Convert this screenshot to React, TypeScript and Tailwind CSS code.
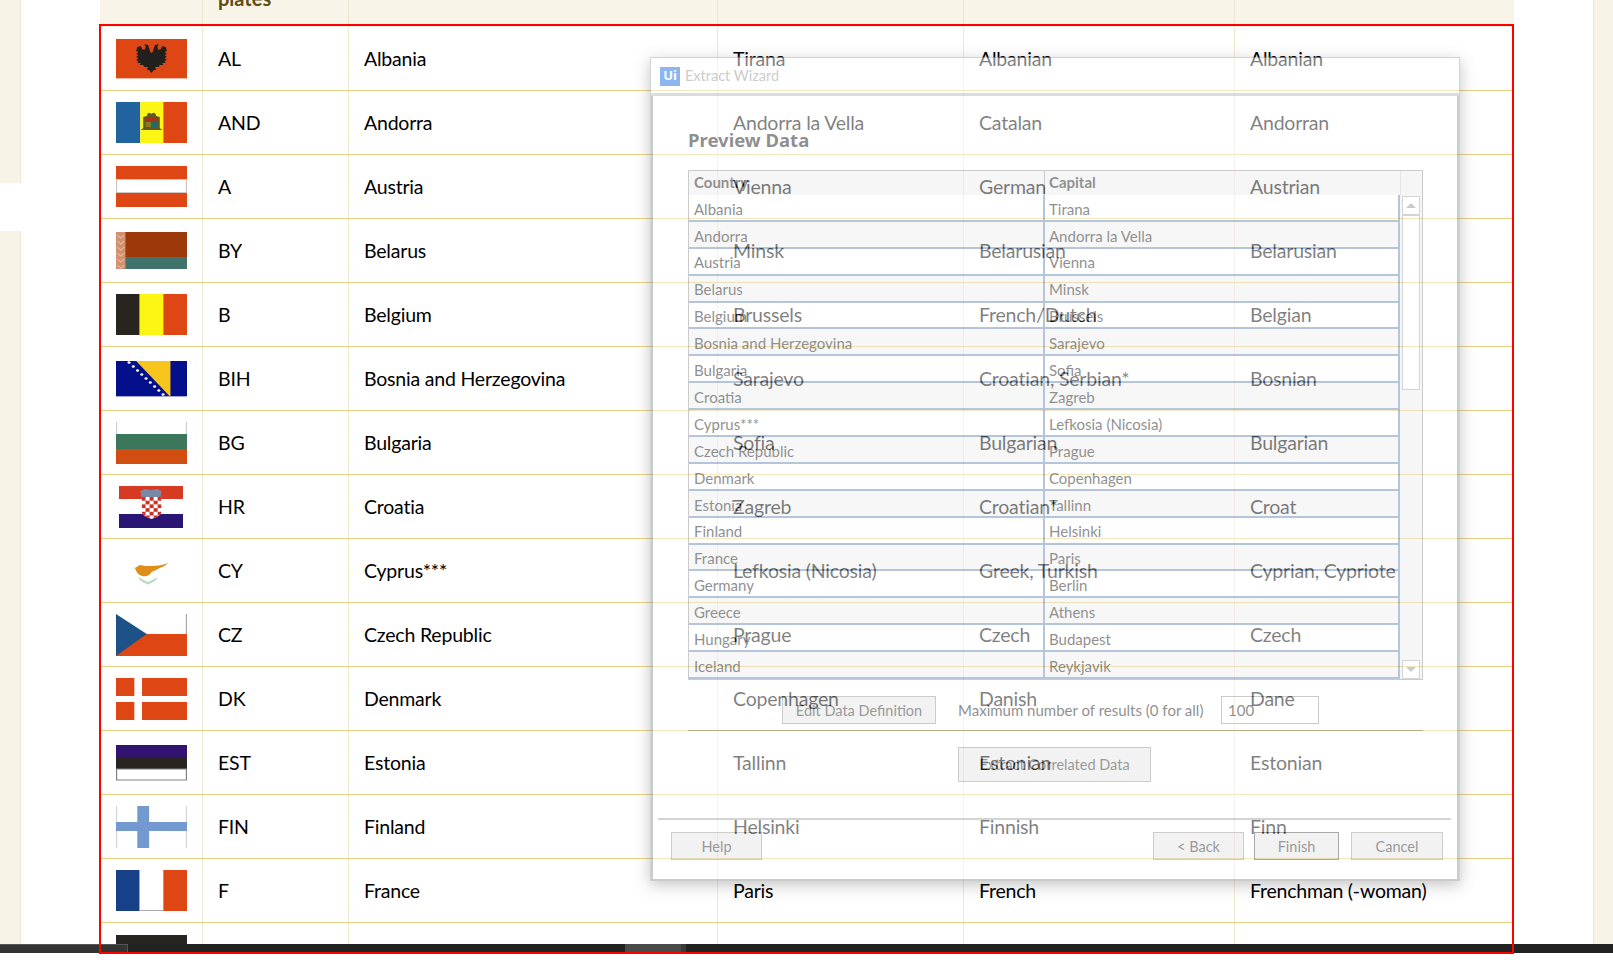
import React from "react";

type Row = { f: string; c: string; n: string; cap: string; lang: string; nat: string };
const rows: Row[] = [
  { f: "al", c: "AL", n: "Albania", cap: "Tirana", lang: "Albanian", nat: "Albanian" },
  { f: "ad", c: "AND", n: "Andorra", cap: "Andorra la Vella", lang: "Catalan", nat: "Andorran" },
  { f: "at", c: "A", n: "Austria", cap: "Vienna", lang: "German", nat: "Austrian" },
  { f: "by", c: "BY", n: "Belarus", cap: "Minsk", lang: "Belarusian", nat: "Belarusian" },
  { f: "be", c: "B", n: "Belgium", cap: "Brussels", lang: "French/Dutch", nat: "Belgian" },
  { f: "ba", c: "BIH", n: "Bosnia and Herzegovina", cap: "Sarajevo", lang: "Croatian, Serbian*", nat: "Bosnian" },
  { f: "bg", c: "BG", n: "Bulgaria", cap: "Sofia", lang: "Bulgarian", nat: "Bulgarian" },
  { f: "hr", c: "HR", n: "Croatia", cap: "Zagreb", lang: "Croatian*", nat: "Croat" },
  { f: "cy", c: "CY", n: "Cyprus***", cap: "Lefkosia (Nicosia)", lang: "Greek, Turkish", nat: "Cyprian, Cypriote" },
  { f: "cz", c: "CZ", n: "Czech Republic", cap: "Prague", lang: "Czech", nat: "Czech" },
  { f: "dk", c: "DK", n: "Denmark", cap: "Copenhagen", lang: "Danish", nat: "Dane" },
  { f: "ee", c: "EST", n: "Estonia", cap: "Tallinn", lang: "Estonian", nat: "Estonian" },
  { f: "fi", c: "FIN", n: "Finland", cap: "Helsinki", lang: "Finnish", nat: "Finn" },
  { f: "fr", c: "F", n: "France", cap: "Paris", lang: "French", nat: "Frenchman (-woman)" },
  { f: "de", c: "D", n: "Germany", cap: "Berlin", lang: "German", nat: "German" },
];

const preview: [string, string][] = [
  ["Albania", "Tirana"], ["Andorra", "Andorra la Vella"], ["Austria", "Vienna"], ["Belarus", "Minsk"],
  ["Belgium", "Brussels"], ["Bosnia and Herzegovina", "Sarajevo"], ["Bulgaria", "Sofia"], ["Croatia", "Zagreb"],
  ["Cyprus***", "Lefkosia (Nicosia)"], ["Czech Republic", "Prague"], ["Denmark", "Copenhagen"], ["Estonia", "Tallinn"],
  ["Finland", "Helsinki"], ["France", "Paris"], ["Germany", "Berlin"], ["Greece", "Athens"],
  ["Hungary", "Budapest"], ["Iceland", "Reykjavik"],
];

const R = "#de4614", K = "#28241f";

function Flag({ f }: { f: string }) {
  const s = (h: number, inner: React.ReactNode) => (
    <svg width={71} height={h} viewBox={`0 0 60 ${h}`} preserveAspectRatio="none" className="block">{inner}</svg>
  );
  switch (f) {
    case "al":
      return s(40, <>
        <rect width="60" height="39" fill={R} />
        <rect y="39" width="60" height="1" fill="#f0b9a4" />
        <path d="M30 34L28 31 26 31 27 28 24 28 23 26 20 26 21 24 18 24 19 22 17 21 19 19 17 18 19 16 17 15 19 13 17 12 18 8 21 7 22 10 24 11 25 8 24 5 27 6 28 9 29 13 30 14 31 13 32 9 33 6 36 5 35 8 36 11 38 10 39 7 42 8 43 12 41 13 43 15 41 16 43 18 41 19 43 21 41 22 42 24 39 24 40 26 37 26 36 28 33 28 34 31 32 31z" fill="#231f1c" />
      </>);
    case "ad":
      return s(41, <>
        <rect width="20.5" height="41" fill="#20639f" />
        <rect x="20.5" width="19.5" height="41" fill="#fdf513" />
        <rect x="40" width="20" height="41" fill={R} />
        <path d="M21 28h18l-2-2v-11l-3-1-1-3h-2l-1 1-1-1h-2l-1 3-3 1v11z" fill="#5f5a22" />
        <rect x="25" y="15" width="4.500" height="5" fill="#a8321a" />
        <rect x="30.500" y="20" width="4.500" height="5" fill="#1f6a6a" />
        <rect x="30.500" y="15" width="4.500" height="5" fill="#a8321a" />
        <rect x="25" y="20" width="4.500" height="5" fill="#8a7a1a" />
      </>);
    case "at":
      return s(41, <>
        <rect width="60" height="41" fill={R} />
        <rect x="0.5" y="13.5" width="59" height="13" fill="#fff" stroke="#cfc6c2" strokeWidth="1" />
      </>);
    case "by":
      return s(37, <>
        <rect width="60" height="25" fill="#9c3809" />
        <rect y="25" width="60" height="12" fill="#3f736c" />
        <rect width="8" height="37" fill="#d48f6f" />
        <path d="M1 3l3 3 3-3M1 9l3 3 3-3M1 15l3 3 3-3M1 21l3 3 3-3M1 27l3 3 3-3M1 33l3 3 3-3" stroke="#fff" fill="none" strokeWidth="1" opacity="0.4" />
      </>);
    case "be":
      return s(41, <>
        <rect width="20" height="41" fill={K} />
        <rect x="20" width="20" height="41" fill="#fdf513" />
        <rect x="40" width="20" height="41" fill={R} />
      </>);
    case "ba":
      return s(36, <>
        <rect width="60" height="36" fill="#040f8c" />
        <path d="M17 0H46V36z" fill="#f8c51c" />
        <rect y="35" width="60" height="1" fill="#a5a8d8" />
        <g fill="#fff">
          {[0, 1, 2, 3, 4, 5, 6, 7, 8].map((i) => (
            <circle key={i} cx={11 + i * 3.6} cy={1.5 + i * 4} r="1.3" />
          ))}
        </g>
      </>);
    case "bg":
      return s(42, <>
        <rect width="60" height="12" fill="#fff" />
        <path d="M0.5 0V12M59.5 0V12" stroke="#cfcfcf" />
        <rect y="12" width="60" height="15" fill="#3a775b" />
        <rect y="27" width="60" height="15" fill="#d24d12" />
      </>);
    case "hr":
      return (
        <svg width="64" height="42" viewBox="0 0 54 42" preserveAspectRatio="none" className="block">
          <rect width="54" height="13" fill="#d63a22" />
          <rect y="13" width="54" height="15" fill="#fff" />
          <rect y="28" width="54" height="14" fill="#2a1575" />
          <path d="M18 5l4-2 5 1 5-1 4 2-1 6H19z" fill="#7a88a8" />
          <clipPath id="hr-shield"><path d="M19 11h17v14c0 4-4 6-8.500 8-4.500-2-8.500-4-8.500-8z" /></clipPath>
          <g clipPath="url(#hr-shield)">
            <rect x="19" y="11" width="17" height="22" fill="#fff" />
            {Array.from({ length: 30 }).map((_, i) =>
              (i % 5 + Math.floor(i / 5)) % 2 === 0 ? (
                <rect key={i} x={19 + (i % 5) * 3.4} y={11 + Math.floor(i / 5) * 3.7} width="3.4" height="3.7" fill="#cf3025" />
              ) : null
            )}
          </g>
        </svg>
      );
    case "cy":
      return s(42, <>
        <path d="M16 18L20 15 25 16 30 16C35 16 40 15 44 13 42 15 40 17 37 18 34 20 32 21 30 22 29 25 26 27 22 26 19 25 17 22 16 18z" fill="#e08e1a" />
        <path d="M19 27C21 29 24 30 26 31.500L27 32 28 31.500C30 30 33 29 35 27 35 30 31 33 27 34.500 23 33 19 30 19 27z" fill="#b9dcc0" />
      </>);
    case "cz":
      return s(42, <>
        <rect width="60" height="20" fill="#fff" />
        <path d="M59.5 0V20" stroke="#a8a8a8" />
        <rect y="20" width="60" height="22" fill={R} />
        <path d="M0 0L26 20 0 42z" fill="#1e5286" />
      </>);
    case "dk":
      return s(42, <>
        <rect width="60" height="42" fill={R} />
        <rect x="15.500" width="6.500" height="42" fill="#fff" />
        <rect y="18" width="60" height="6" fill="#fff" />
      </>);
    case "ee":
      return s(36, <>
        <rect width="60" height="12" fill="#331370" />
        <rect y="12" width="60" height="12" fill={K} />
        <rect x="0.5" y="24" width="59" height="11" fill="#fff" stroke="#808080" />
      </>);
    case "fi":
      return s(42, <>
        <rect width="60" height="42" fill="#fff" />
        <path d="M0.5 0V42M59.5 0V42" stroke="#d5d5d5" />
        <rect x="18" width="10" height="42" fill="#7299d0" />
        <rect y="16" width="60" height="9" fill="#7299d0" />
      </>);
    case "fr":
      return s(41, <>
        <rect width="20" height="41" fill="#164088" />
        <rect x="20" width="20" height="41" fill="#fff" />
        <rect x="20" y="40" width="20" height="1" fill="#aaa" />
        <rect x="40" width="20" height="41" fill={R} />
      </>);
    default:
      return s(40, <rect width="60" height="40" fill={K} />);
  }
}

function BodyRow({ r }: { r: Row }) {
  return (
    <div className="grid h-16 shrink-0 grid-cols-[103px_146px_369px_246px_271px_1fr] border-b border-[#e8d080]">
      <div className="flex items-center justify-center border-r border-[#f0e8d0]">
        <Flag f={r.f} />
      </div>
      <div className="flex items-center border-r border-[#f0e8d0] pl-[15px] pt-[1px]">{r.c}</div>
      <div className="flex items-center border-r border-[#f0e8d0] pl-[15px] pt-[1px]">{r.n}</div>
      <div className="flex items-center border-r border-[#f0e8d0] pl-[15px] pt-[1px]">{r.cap}</div>
      <div className="flex items-center border-r border-[#f0e8d0] pl-[15px] pt-[1px]">{r.lang}</div>
      <div className="flex items-center pl-[15px] pt-[1px]">{r.nat}</div>
    </div>
  );
}

function Btn({ className, children }: { className: string; children: React.ReactNode }) {
  return (
    <div className={`flex items-center justify-center border border-[#9a9a9a] bg-[#e6e6e6] pt-[1px] text-[14.500px] text-[#333] ${className}`}>
      {children}
    </div>
  );
}

function Dialog() {
  return (
    <div className="absolute left-[650px] top-[57px] h-[824px] w-[810px] border border-[#aaa] bg-white font-['Lato',sans-serif] opacity-50 shadow-[0_4px_14px_rgba(0,0,0,0.45)]">
      <div className="flex h-[38px] items-center gap-[5px] border-b-[3px] border-[#bbb] pl-[9px] pt-[1px]">
        <div className="flex h-[19px] w-[20px] items-center justify-center bg-[#1a6fe0] font-['Noto_Sans',sans-serif] text-[13px] font-bold text-white">Ui</div>
        <span className="text-[14.500px] text-[#999]">Extract Wizard</span>
      </div>
      <div className="h-[785px] border-x-[2px] border-b-[2px] border-[#999] pl-[35px] pt-[31px]">
        <div className="h-[43px] font-['Noto_Sans',sans-serif] text-[18.500px] font-bold leading-[26px] text-[#222]">Preview Data</div>
        <div className="w-[735px] border border-[#999]">
          <div className="flex h-[24px]">
            <div className="flex w-[711px] bg-[#eee] text-[15px] font-bold text-[#222]">
              <div className="w-[356px] border-r border-[#999] pl-[5px] leading-[22px]">Country</div>
              <div className="flex-1 pl-[4px] leading-[22px]">Capital</div>
            </div>
            <div className="w-[22px] border-l border-[#ccc] bg-[#eee]" />
          </div>
          <div className="flex">
            <div className="w-[711px] border-r-2 border-[#6d8fbb]">
              {preview.map((p, i) => (
                <div
                  key={p[0]}
                  className={`flex h-[26.900px] items-center border-b-2 border-[#6d8fbb] text-[15px] text-[#222] ${i % 2 ? "bg-[#f0f0f0]" : "bg-white"}`}
                >
                  <div className="flex h-full w-[356px] items-center border-r-2 border-[#6d8fbb] pl-[5px] pt-[3px]">{p[0]}</div>
                  <div className="flex-1 pl-[4px] pt-[3px]">{p[1]}</div>
                </div>
              ))}
            </div>
            <div className="flex w-[22px] flex-col items-center bg-[#efefef] pt-[1px]">
              <div className="flex h-[19px] w-[18px] items-center justify-center border border-[#aaa] bg-white">
                <div className="h-0 w-0 border-x-[5px] border-b-[5px] border-x-transparent border-b-[#999]" />
              </div>
              <div className="h-[175px] w-[18px] border border-[#aaa] bg-white" />
              <div className="flex-1" />
              <div className="flex h-[19px] w-[18px] items-center justify-center border border-[#aaa] bg-white">
                <div className="h-0 w-0 border-x-[5px] border-t-[5px] border-x-transparent border-t-[#999]" />
              </div>
            </div>
          </div>
        </div>
        <div className="mt-[16px] flex h-[28px] items-center text-[15px] text-[#222]">
          <Btn className="ml-[94px] h-[28px] w-[154px]">Edit Data Definition</Btn>
          <span className="ml-[22px] w-[263px] whitespace-nowrap pt-[1px]">Maximum number of results (0 for all)</span>
          <div className="flex h-[28px] w-[98px] items-center border border-[#999] pl-[6px] pt-[1px]">100</div>
        </div>
        <div className="mt-[6px] h-px w-[735px] bg-[#8c8c8c]" />
        <Btn className="ml-[270px] mt-[16px] h-[35px] w-[193px]">Extract Correlated Data</Btn>
        <div className="-ml-[30px] mt-[36px] h-[2px] w-[793px] bg-[#aaa]" />
        <div className="-ml-[17px] mt-[12px] flex h-[28px] w-[772px]">
          <Btn className="h-[28px] w-[91px]">Help</Btn>
          <Btn className="ml-[391px] h-[28px] w-[91px]">&lt; Back</Btn>
          <Btn className="ml-[10px] h-[28px] w-[85px] border-[#555] bg-[#ccc]">Finish</Btn>
          <Btn className="ml-[12px] h-[28px] w-[92px]">Cancel</Btn>
        </div>
      </div>
    </div>
  );
}

export default function App() {
  return (
    <div className="relative h-[978px] w-full overflow-hidden bg-white font-['Lato',sans-serif]">
      <div className="flex h-[944px] overflow-hidden">
        <div className="flex w-[21px] shrink-0 flex-col">
          <div className="h-[183px] border-r border-[#ece7d6] bg-[#f7f4e7]" />
          <div className="h-[48px] bg-white" />
          <div className="flex-1 border-r border-[#ece7d6] bg-[#f7f4e7]" />
        </div>
        <div className="w-[79px] shrink-0" />
        <div className="flex-1 text-[19.500px] tracking-[-0.2px] text-black">
          <div className="grid h-[27px] grid-cols-[103px_146px_369px_246px_271px_1fr] bg-[#f8f5e8]">
            <div className="border-r border-[#ece6cf]" />
            <div className="overflow-hidden border-r border-[#ece6cf] pl-[15px]">
              <div className="-mt-[15px] text-[20px] font-bold leading-[26px] tracking-normal text-[#5e4d14]">plates</div>
            </div>
            <div className="border-r border-[#ece6cf]" />
            <div className="border-r border-[#ece6cf]" />
            <div className="border-r border-[#ece6cf]" />
            <div />
          </div>
          {rows.map((r) => (
            <BodyRow key={r.c} r={r} />
          ))}
        </div>
        <div className="w-[79px] shrink-0" />
        <div className="w-[20px] shrink-0 border-l border-[#ece7d6] bg-[#f7f4e7]" />
      </div>
      <div className="relative h-[9px] bg-[#222]">
        <div className="absolute left-0 top-0 h-full w-[128px] border-r border-t border-[#555] bg-[#333]" />
        <div className="absolute left-[625px] top-0 h-full w-[61px] bg-[#3a3a3a]">
          <div className="h-full w-[56px] bg-[#4a4a4a]" />
        </div>
      </div>
      <div className="absolute left-[99px] top-[24px] h-[930px] w-[1415px] border-2 border-[#ff0000]" />
      <Dialog />
    </div>
  );
}
